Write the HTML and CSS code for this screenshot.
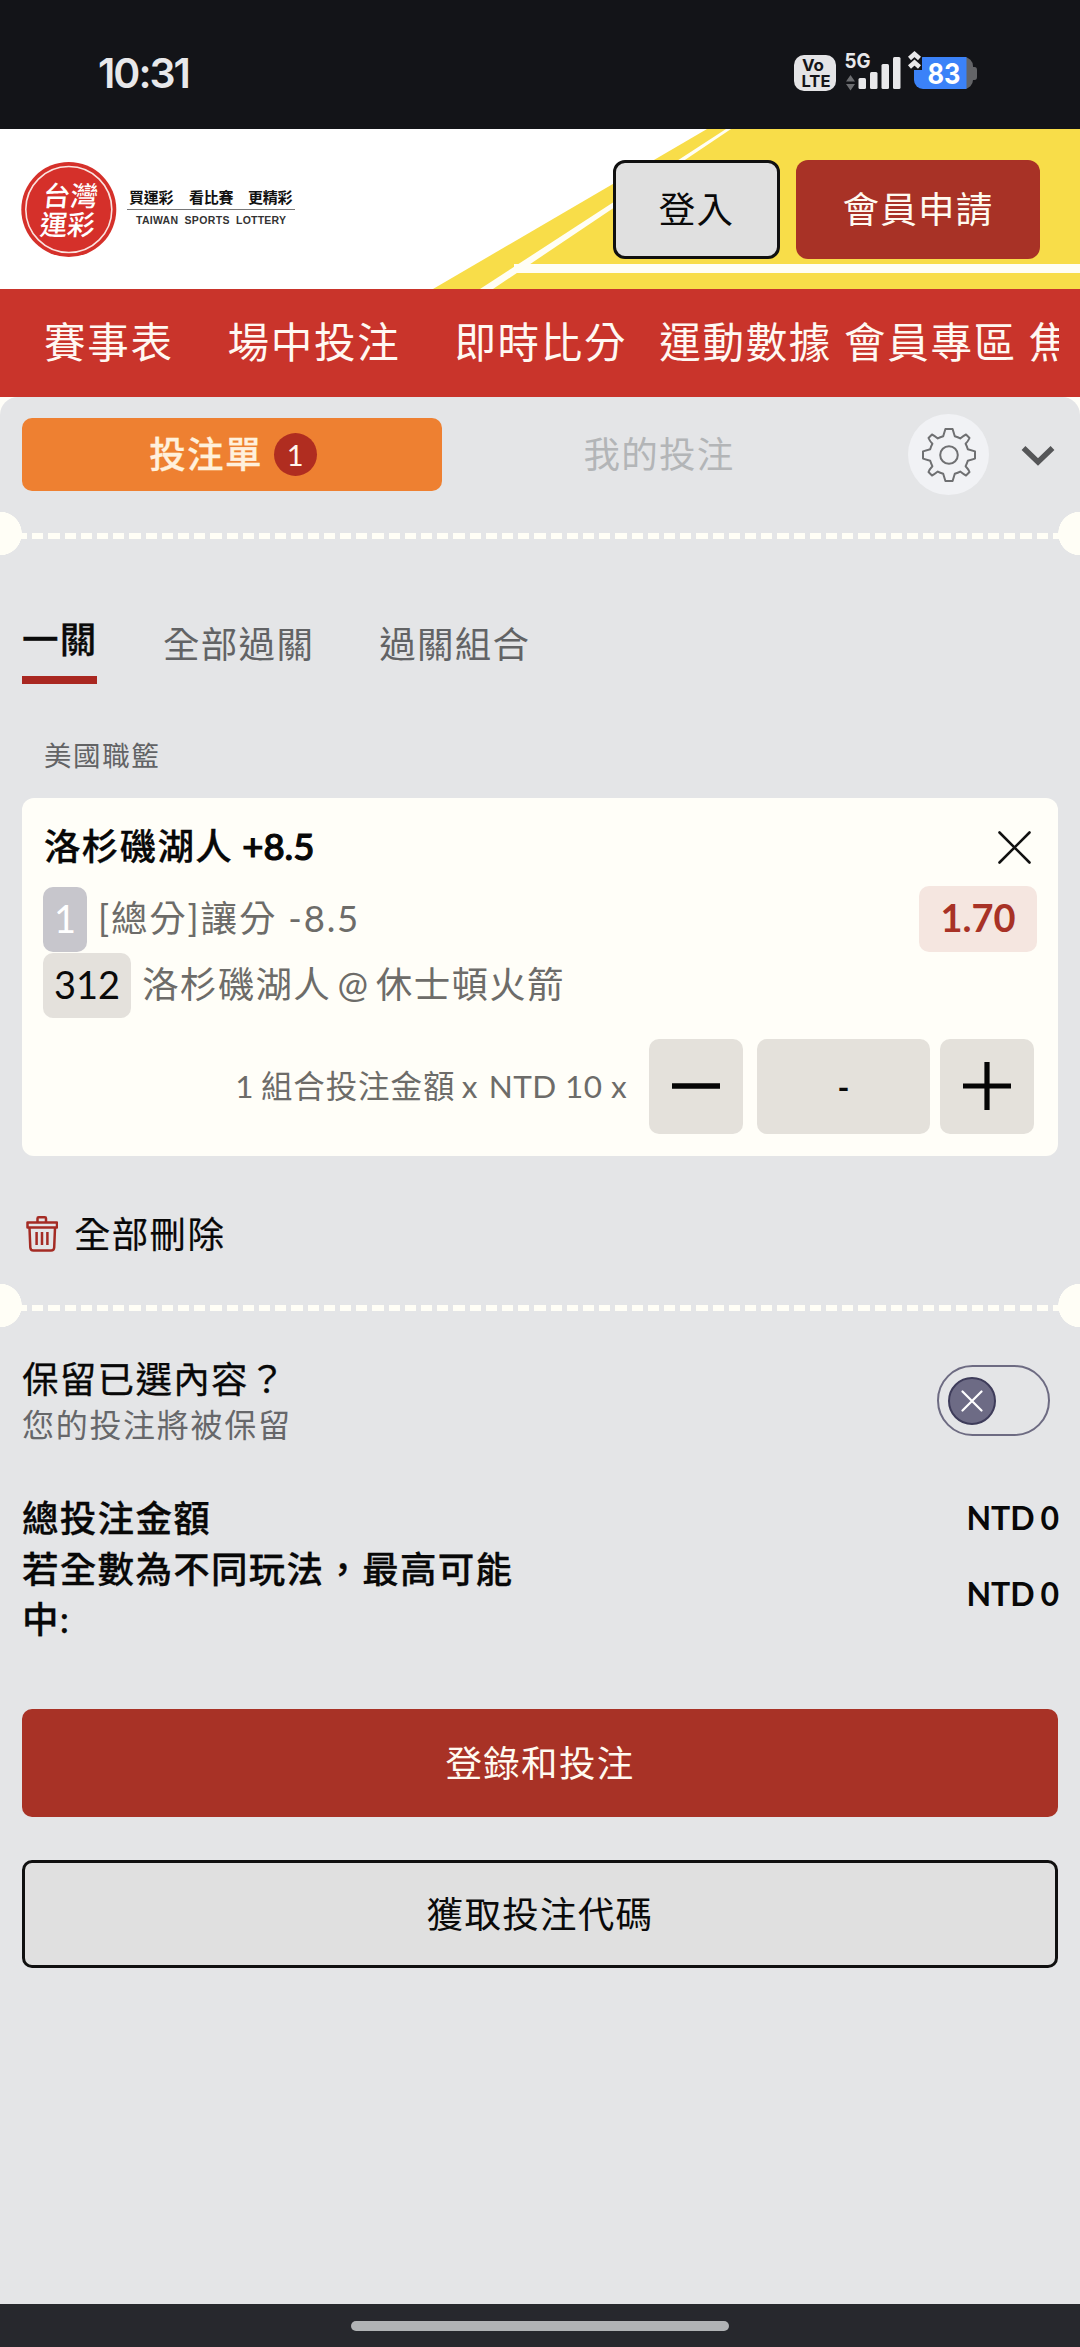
FILE: index.html
```html
<!DOCTYPE html>
<html lang="zh-Hant">
<head>
<meta charset="utf-8">
<title>台灣運彩</title>
<link rel="stylesheet" href="styles.css">
</head>
<body>
<div class="status">
  <span class="clock">10:31</span>
  <svg class="status-icons" width="190" height="50" viewBox="790 48 190 50">
    <rect x="794" y="55" width="42" height="36" rx="10" fill="#e4e4e6"/>
    <text x="813" y="71" class="lte" text-anchor="middle" textLength="22" lengthAdjust="spacingAndGlyphs">Vo</text>
    <text x="816" y="86.500" class="lte" text-anchor="middle" textLength="29" lengthAdjust="spacingAndGlyphs">LTE</text>
    <text x="844.500" y="68" class="fiveg" textLength="26" lengthAdjust="spacingAndGlyphs">5G</text>
    <path d="M850.5 75l4.500 6.500h-9zM850.500 90.500l4.500-6.500h-9z" fill="#6c6d70"/>
    <g fill="#e8e8ea"><rect x="858.500" y="78" width="7.500" height="11" rx="1.500"/><rect x="870" y="72" width="7.500" height="17" rx="1.500"/><rect x="881.500" y="64" width="7.500" height="25" rx="1.500"/><rect x="893" y="57" width="7.500" height="32" rx="1.500"/></g>
    <path d="M960 57h4a9 9 0 0 1 9 9v1h1.500q2.500 0 2.500 3v7q0 3-2.500 3h-1.500a9 9 0 0 1-9 9h-4z" fill="#636467"/>
    <path d="M923 57h43.500v32h-43.500a9 9 0 0 1-9-9v-14a9 9 0 0 1 9-9z" fill="#3b82f8"/>
    <path d="M905 50H922V70H905z" fill="#131418"/>
    <path d="M909.500 58.500l5-4.500 5 4.500M909.500 67l5-4.500 5 4.500" fill="none" stroke="#e8e8ea" stroke-width="4.500"/>
    <text x="944" y="83.500" class="pct" text-anchor="middle" textLength="33" lengthAdjust="spacingAndGlyphs">83</text>
  </svg>
</div>

<header class="header">
  <svg class="stripes" width="1080" height="160" viewBox="0 0 1080 160">
    <path d="M433 160L707 0H1080V160z" fill="#f8dd49"/>
    <path d="M480 160L726 0H731L493 160z" fill="#fffef5"/>
    <path d="M514 135H1080V144H514z" fill="#fffef5"/>
  </svg>
  <svg class="logo" width="280" height="100" viewBox="20 160 280 100">
    <circle cx="68.800" cy="209.500" r="47.500" fill="#d5302a"/>
    <circle cx="68.800" cy="209.500" r="43" fill="none" stroke="#fbe3df" stroke-width="1.600"/>
    <g class="seal" transform="translate(69 210) skewX(-6)">
      <text x="0" y="-4" text-anchor="middle">台灣</text>
      <text x="0" y="25" text-anchor="middle">運彩</text>
    </g>
    <g class="slogan"><text x="129" y="203" textLength="44.500">買運彩</text><text x="189" y="203" textLength="44.500">看比賽</text><text x="248" y="203" textLength="44.500">更精彩</text></g>
    <path d="M127 209.500H295" stroke="#777" stroke-width="1.200"/>
    <g class="tsl"><text x="136" y="224" textLength="42">TAIWAN</text><text x="184.500" y="224" textLength="45">SPORTS</text><text x="236" y="224" textLength="50">LOTTERY</text></g>
  </svg>
  <div class="actions">
    <button class="btn login">登入</button>
    <button class="btn register">會員申請</button>
  </div>
</header>

<nav class="nav"><div class="nav-clip">
  <a>賽事表</a><a>場中投注</a><a>即時比分</a><a class="tight">運動數據</a><a class="tighter">會員專區</a><a>焦點</a>
</div></nav>

<main class="slip">
  <div class="slip-head">
    <div class="tab on">投注單<span class="count">1</span></div>
    <div class="tab off">我的投注</div>
    <div class="gear"><svg width="58" height="58" viewBox="-29 -29 58 58" fill="none" stroke="#6f7072" stroke-width="2">
      <circle r="8.800"/>
      <path d="M-3.600 -26H3.600L5.800 -18.800Q9 -17.800 11.200 -16.600Q14.500 -19.300 17 -20.500L20.500 -17Q19.300 -14 16.600 -11.200Q17.800 -9 18.800 -5.800L26 -3.600V3.600L18.800 5.800Q17.800 9 16.600 11.200Q19.300 14 20.500 17L17 20.500Q14.500 19.300 11.200 16.600Q9 17.800 5.800 18.800L3.600 26H-3.600L-5.800 18.800Q-9 17.800 -11.200 16.600Q-14.500 19.300 -17 20.500L-20.500 17Q-19.300 14 -16.600 11.200Q-17.800 9 -18.800 5.800L-26 3.600V-3.600L-18.800 -5.800Q-17.800 -9 -16.600 -11.200Q-19.300 -14 -20.500 -17L-17 -20.500Q-14.500 -19.300 -11.200 -16.600Q-9 -17.800 -5.800 -18.800Z" stroke-linejoin="round"/>
    </svg></div>
    <svg class="chev" width="34" height="22" viewBox="0 0 34 22" fill="none" stroke="#555658" stroke-width="5.500"><path d="M2.500 3L17 17 31.500 3"/></svg>
  </div>
  <div class="perf"></div>

  <div class="modes"><span class="mode active">一關</span><span class="mode">全部過關</span><span class="mode">過關組合</span></div>
  <div class="league">美國職籃</div>

  <section class="card">
    <div class="card-title"><span>洛杉磯湖人<span class="handicap"> +8.5</span></span>
      <svg width="33" height="33" viewBox="0 0 33 33" stroke="#111" stroke-width="2.600" stroke-linecap="round"><path d="M1.500 1.500L31.500 31.500M31.500 1.500L1.500 31.500"/></svg></div>
    <div class="line"><span class="num violet">1</span><span class="market">[總分]讓分 -8.5</span><span class="odds">1.70</span></div>
    <div class="line"><span class="num">312</span><span class="match">洛杉磯湖人 @ 休士頓火箭</span></div>
    <div class="stake"><span class="stake-label">1 組合投注金額 x <span class="cur">NTD 10 x</span></span>
      <span class="step"><svg width="48" height="48"><path d="M0 24H48" stroke="#050505" stroke-width="5.500"/></svg></span>
      <span class="amount">-</span>
      <span class="step"><svg width="48" height="48"><path d="M0 24H48M24 0V48" stroke="#050505" stroke-width="5.200"/></svg></span></div>
  </section>

  <div class="clear"><svg width="32" height="36" viewBox="26 1217 32 36" fill="none" stroke="#a42b24" stroke-width="2.500" stroke-linejoin="round">
    <path d="M27.500 1223.500H57V1228.500H27.500z"/><path d="M37.500 1223V1219.500Q37.500 1218.300 38.700 1218.300H44.800Q46 1218.300 46 1219.500V1223"/><path d="M29.500 1229L30.300 1248.500Q30.500 1251.500 33.500 1251.500H51Q54 1251.500 54.200 1248.500L55 1229"/><path d="M36.600 1233V1246M42 1233V1246M47.400 1233V1246"/></svg>全部刪除</div>
  <div class="perf"></div>

  <div class="keep"><div><div class="keep-q">保留已選內容？</div><div class="keep-s">您的投注將被保留</div></div>
    <span class="toggle"><span class="knob"><svg width="22" height="22" viewBox="0 0 22 22" stroke="#fff" stroke-width="2.200" stroke-linecap="round"><path d="M1.500 1.500L20.500 20.500M20.500 1.500L1.500 20.500"/></svg></span></span></div>

  <div class="totals">
    <div class="total"><span class="label">總投注金額</span><span class="ntd">NTD 0</span></div>
    <div class="total"><span class="label">若全數為不同玩法，最高可能中:</span><span class="ntd">NTD 0</span></div>
  </div>
  <button class="big primary">登錄和投注</button>
  <button class="big ghost">獲取投注代碼</button>
</main>
<footer class="homebar"><span></span></footer>
</body>
</html>
```
FILE: styles.css
```css
* { box-sizing: border-box; }
body {
  margin: 0; width: 1080px; height: 2347px; overflow: hidden;
  display: flex; flex-direction: column;
  background: #fffef8; color: #080808;
  font-family: Lato, "Noto Sans CJK TC", sans-serif;
  font-size: 36.500px; letter-spacing: 1.300px;
}
button { font: inherit; letter-spacing: inherit; padding: 0; margin: 0; }
svg { display: block; flex: none; }
svg text { letter-spacing: 0; }

.status { height: 129px; flex: none; background: #131418; display: flex; justify-content: space-between; padding: 48px 100px 0 98px; }
.clock { font: 600 41px/50px Inter, sans-serif; letter-spacing: -2px; color: #e8e8ea; }
.lte { font: 700 16.500px Inter, sans-serif; fill: #131418; }
.fiveg { font: 700 20px Inter, sans-serif; fill: #e8e8ea; }
.pct { font: 700 28px Inter, sans-serif; fill: #fff; }

.header { position: relative; height: 160px; flex: none; background: #fff; display: flex; justify-content: space-between; align-items: flex-start; padding: 31px 40px 0 20px; }
.stripes { position: absolute; left: 0; top: 0; }
.logo, .actions { position: relative; }
.seal { font: 500 27.500px "Noto Sans CJK TC", sans-serif; fill: #fff; }
.slogan { font: 700 15px "Noto Sans CJK TC", sans-serif; fill: #111; }
.tsl { font: 700 10.500px "Liberation Sans", sans-serif; fill: #333; }
.actions { display: flex; gap: 16px; }
.btn { height: 99px; border-radius: 12px; padding-bottom: 5px; }
.login { width: 167px; background: #e0e0e0; border: 3px solid #101010; color: #0a0a0a; }
.register { width: 244px; background: #a83226; border: 0; color: #fffaf0; }

.nav { height: 108px; flex: none; background: #c9342b; padding: 0 21px 0 44px; }
.nav-clip { display: flex; overflow: hidden; height: 108px; line-height: 106px; font-size: 41.500px; letter-spacing: 1.700px; color: #fff8f2; white-space: nowrap; }
.nav-clip a { margin-right: 54px; flex: none; }
.nav-clip a:nth-child(3) { margin-right: 32px; }
.nav-clip .tight, .nav-clip .tighter { margin-right: 12px; }

.slip { flex: 1; background: #e4e5e7; border-radius: 18px 18px 0 0; display: flex; flex-direction: column; }
.slip-head { height: 115px; padding: 17px 25px 0 22px; display: flex; align-items: flex-start; }
.tab { width: 420px; height: 73px; margin-top: 4px; display: flex; align-items: center; justify-content: center; border-radius: 10px; line-height: 48px; padding-bottom: 2px; }
.on { background: #ee8031; color: #fff0dc; font-weight: 500; padding-left: 2px; -webkit-text-stroke: .300px #fff0dc; }
.off { color: #b3b5b7; width: 434px; }
.count { width: 43px; height: 43px; border-radius: 50%; margin: 2px 0 0 11px; background: #b02d20; color: #fff5ec; font-size: 29px; line-height: 43px; text-align: center; letter-spacing: 0; font-weight: 400; -webkit-text-stroke-width: 0; }
.gear { width: 81px; height: 81px; margin-left: 32px; border-radius: 50%; background: #f1f2f5; display: flex; align-items: center; justify-content: center; }
.chev { margin: 31px 0 0 32px; }

.perf { height: 43px; flex: none; background:
  radial-gradient(circle at 0 50%, #fffef6 21.500px, transparent 22px),
  radial-gradient(circle at 100% 50%, #fffef6 21.500px, transparent 22px),
  repeating-linear-gradient(90deg, #fffef6 0 11.200px, transparent 11.200px 16.200px) 15.800px 21px / 1048px 6px no-repeat; }

.modes { display: flex; padding: 51px 0 0 22px; height: 155px; line-height: 70px; color: #626365; }
.mode { margin: 3px 65px 0 0; }
.active { margin: 0 66px 0 0; height: 78px; width: 75px; border-bottom: 8px solid #a92721; color: #0a0a0a; font-weight: 500; line-height: 67px; white-space: nowrap; -webkit-text-stroke: .300px #0a0a0a; }
.league { height: 88px; padding-left: 44px; line-height: 92px; font-size: 27.500px; letter-spacing: 1.600px; color: #626365; }

.card { margin: 0 22px; height: 358px; flex: none; background: #fffef8; border-radius: 12px; padding: 0 21px; }
.card-title { height: 88px; padding: 4px 6px 0 1px; display: flex; align-items: center; justify-content: space-between; font-weight: 500; white-space: nowrap; -webkit-text-stroke: .300px #080808; }
.handicap { letter-spacing: 0; -webkit-text-stroke-width: 1.200px; }
.card-title svg { margin-top: 6px; }
.line { display: flex; height: 66px; align-items: center; color: #6d6c69; white-space: nowrap; }
.market, .match { line-height: 50px; margin-bottom: 3px; }
.market { letter-spacing: 1.800px; }
.match { word-spacing: -4.200px; }
.num { height: 65px; padding: 0 11px; margin-right: 11px; border-radius: 10px; background: #e4e1dc; color: #0a0a0a; line-height: 63px; font-size: 38px; letter-spacing: 0; }
.violet { background: #c7c6cc; color: #fff; }
.odds { margin-left: auto; width: 118px; height: 66px; border-radius: 10px; background: #f5e6e0; color: #a83226; font-weight: 700; font-size: 38px; letter-spacing: 0; line-height: 63px; text-align: center; }
.stake { display: flex; justify-content: flex-end; align-items: center; margin: 20px 3px 0 0; height: 96px; }
.stake-label { font-size: 31.500px; letter-spacing: .900px; word-spacing: -2.500px; color: #6d6c69; margin: 0 22px 4px 0; white-space: nowrap; }
.cur { letter-spacing: .400px; word-spacing: 0; margin-left: 4px; }
.step, .amount { height: 95px; width: 94px; border-radius: 10px; background: #e4e1db; display: flex; align-items: center; justify-content: center; }
.amount { width: 173px; margin: 0 10px 0 14px; font-size: 32px; font-weight: 700; letter-spacing: 0; }

.clear { height: 128px; padding: 35px 0 7px 26px; display: flex; gap: 16px; align-items: center; line-height: 70px; -webkit-text-stroke: .200px #080808; }

.keep { display: flex; justify-content: space-between; padding: 25px 30px 0 22px; height: 160px; }
.keep-q { line-height: 54px; -webkit-text-stroke: .300px #080808; }
.keep-s { font-size: 32px; letter-spacing: 1.700px; line-height: 38px; color: #66676a; }
.toggle { margin-top: 13px; width: 113px; height: 71px; border: 2.500px solid #6d6b82; border-radius: 36px; display: flex; align-items: center; padding-left: 9px; }
.knob { width: 48px; height: 48px; border-radius: 50%; background: #6d6b85; border: 2.500px solid #3e3c5a; display: flex; align-items: center; justify-content: center; }

.totals { padding: 6px 21px 0 22px; height: 222px; font-weight: 500; }
.total { display: flex; justify-content: space-between; align-items: center; line-height: 50.500px; }
.label { width: 500px; -webkit-text-stroke: .300px #080808; }
.ntd { font-size: 32px; letter-spacing: 0; word-spacing: -2px; font-weight: 700; }

.big { margin: 0 22px; height: 108px; flex: none; border-radius: 10px; padding-bottom: 3px; }
.primary { background: #a83226; border: 0; color: #fffaf0; }
.ghost { margin-top: 43px; background: #e0e0e0; border: 3px solid #101010; color: #0a0a0a; }

.homebar { height: 43px; flex: none; background: #27282d; display: flex; justify-content: center; align-items: center; }
.homebar span { width: 378px; height: 10px; border-radius: 5px; background: #b1b3b5; }
```
